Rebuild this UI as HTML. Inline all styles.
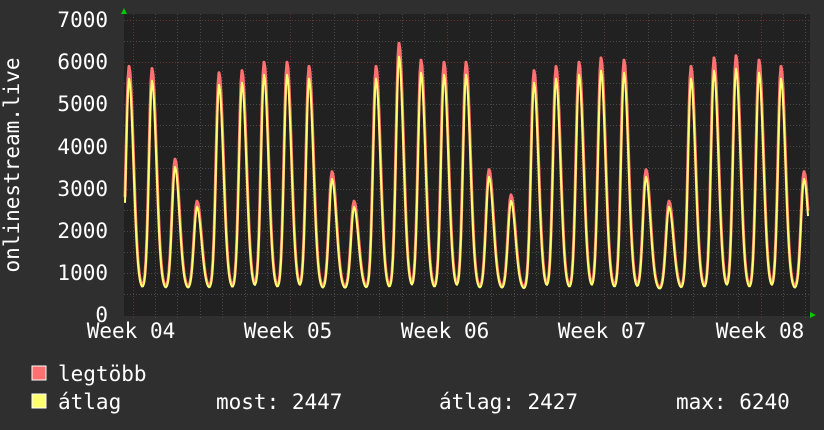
<!DOCTYPE html>
<html><head><meta charset="utf-8"><style>
html,body{margin:0;padding:0;background:#2f2f2f;width:824px;height:430px;overflow:hidden}
svg{display:block}
text{font-family:"DejaVu Sans Mono","Liberation Mono",monospace;fill:#fff;font-size:21px}
</style></head><body>
<svg id="s" width="824" height="430" xmlns="http://www.w3.org/2000/svg">
<rect x="124" y="14" width="686" height="302" fill="#212121"/>
<g id="grid"></g>
<polyline id="mx" fill="none" stroke="#ff7070" stroke-width="3" stroke-linejoin="round"/>
<polyline id="av" fill="none" stroke="#ffff70" stroke-width="2" stroke-linejoin="round"/>
<polygon points="121,14 127,14 124,8" fill="#0c0"/>
<polygon points="810,312 810,318 816,315" fill="#0c0"/>
<g text-anchor="end">
<text x="108" y="27">7000</text><text x="108" y="69">6000</text><text x="108" y="111">5000</text>
<text x="108" y="154">4000</text><text x="108" y="196">3000</text><text x="108" y="238">2000</text>
<text x="108" y="280">1000</text><text x="108" y="322">0</text>
</g>
<text transform="translate(19,165) rotate(-90)" text-anchor="middle">onlinestream.live</text>
<g text-anchor="middle">
<text x="131" y="338">Week 04</text><text x="288" y="338">Week 05</text><text x="445" y="338">Week 06</text>
<text x="602" y="338">Week 07</text><text x="760" y="338">Week 08</text>
</g>
<rect x="32" y="366" width="14" height="14" fill="#ff7070" stroke="#fff" stroke-width="1"/>
<rect x="32" y="394" width="14" height="14" fill="#ffff70" stroke="#fff" stroke-width="1"/>
<text x="58" y="381">legtöbb</text>
<text x="58" y="409">átlag</text>
<text x="216" y="409">most: 2447</text>
<text x="439" y="409">átlag: 2427</text>
<text x="676" y="409">max: 6240</text>
</svg>
<script>
var g=document.getElementById('grid'),h='';
function Y(v){return 315-v*0.04214;}
for(var v=500;v<=7000;v+=500){var y=Math.round(Y(v))+.5;h+='<line x1="124" x2="810" y1="'+y+'" y2="'+y+'" stroke="'+(v%1000==0&&v>=6000?'#6a3434':'#4a4a4a')+'" stroke-dasharray="1,2"/>';}
for(var i=0;i<32;i++){var x=Math.round(132.5+i*22.43)+.5;if(x>810)break;var wk=(i%7==0);h+='<line x1="'+x+'" x2="'+x+'" y1="14" y2="318" stroke="'+(wk?'#6a3434':'#4a4a4a')+'" stroke-dasharray="1,2"/>';}
g.innerHTML=h;
var pk=[[129,5900],[152,5850],[175,3700],[197,2700],[219,5750],[242,5800],[264,6000],[287,6000],[309,5900],[332,3400],[354,2700],[376,5900],[399,6450],[421,6050],[444,6000],[466,6000],[489,3450],[511,2850],[534,5800],[556,5900],[579,6000],[601,6100],[624,6050],[646,3450],[669,2700],[691,5900],[714,6100],[736,6150],[759,6050],[781,5900],[804,3400]];
var a=[],m=[];
for(var x=125;x<=808;x++){var v=620;for(var j=0;j<pk.length;j++){var u=(x-pk[j][0])/22.4;var gg=u<0?Math.exp(-Math.pow(u/0.19,2)):Math.exp(-Math.pow(u/0.28,2));v+=(pk[j][1]-620)*gg;}
if(x>=806)v=Math.max(v,2447);
a.push(x+','+Y(v*0.95).toFixed(1));m.push(x+','+Y(v).toFixed(1));}
document.getElementById('mx').setAttribute('points',m.join(' '));
document.getElementById('av').setAttribute('points',a.join(' '));
</script>
</body></html>
